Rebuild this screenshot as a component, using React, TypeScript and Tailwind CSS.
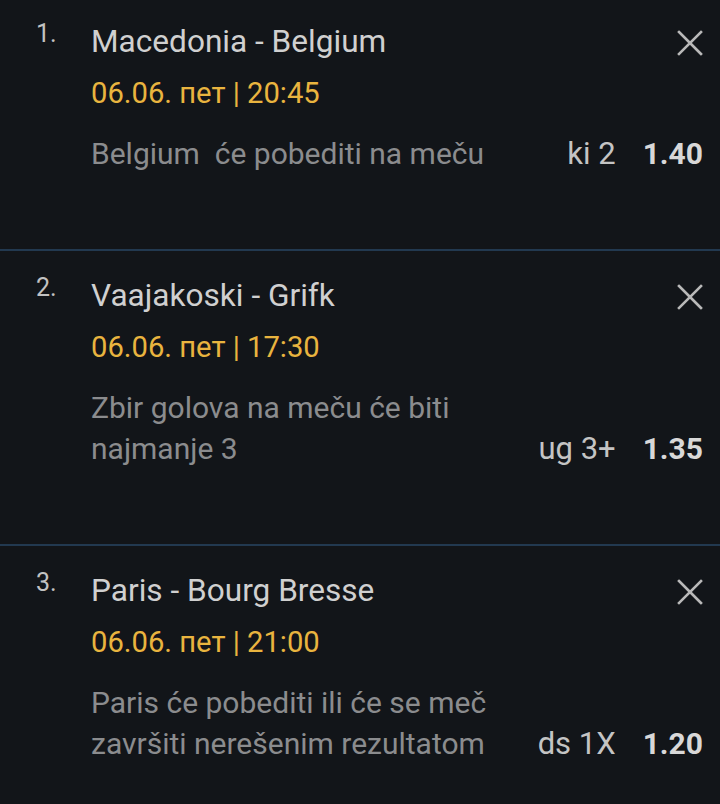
import React from "react";

type Bet = {
  n: string;
  title: string;
  date: string;
  desc: string[];
  pick: string;
  odd: string;
};

const bets: Bet[] = [
  { n: "1.", title: "Macedonia - Belgium", date: "06.06. пет | 20:45", desc: ["Belgium\u00a0 će pobediti na meču"], pick: "ki 2", odd: "1.40" },
  { n: "2.", title: "Vaajakoski - Grifk", date: "06.06. пет | 17:30", desc: ["Zbir golova na meču će biti", "najmanje 3"], pick: "ug 3+", odd: "1.35" },
  { n: "3.", title: "Paris - Bourg Bresse", date: "06.06. пет | 21:00", desc: ["Paris će pobediti ili će se meč", "završiti nerešenim rezultatom"], pick: "ds 1X", odd: "1.20" },
];

function CloseIcon() {
  return (
    <svg width="26" height="26" viewBox="0 0 26 26" fill="none" stroke="#b9b9b9" strokeWidth="2.6" strokeLinecap="square">
      <path d="M2 2L24 24M24 2L2 24" />
    </svg>
  );
}

export default function App() {
  return (
    <div className="w-[720px] h-[804px] overflow-hidden bg-[#121519]" style={{ fontFamily: "Roboto, 'Noto Sans', sans-serif" }}>
      <div className="mt-[-3px] flex flex-col">
        {bets.map((b) => (
          <div key={b.n} className="flex border-b-2 border-[#223950] pt-[23px] pb-[75px] pr-[17px]">
            <div className="w-[91px] shrink-0 pl-[36px] pt-[1px] text-[25px] leading-[26px] text-[#c2c2c2]">{b.n}</div>
            <div className="flex-1 flex flex-col">
              <div className="flex justify-between items-start">
                <div className="text-[31.6px] leading-[44px] text-[#d0d0d0]">{b.title}</div>
                <div className="mt-[10px]"><CloseIcon /></div>
              </div>
              <div className="mt-[7px] text-[29.2px] leading-[44px] text-[#e9b43f]">{b.date}</div>
              <div className="mt-[18px] flex justify-between items-end">
                <div className="text-[30px] leading-[41px] text-[#8b8c8e]">
                  {b.desc.map((d) => (
                    <div key={d} className="whitespace-pre">{d}</div>
                  ))}
                </div>
                <div className="flex items-baseline gap-[27px] leading-[41px]">
                  <span className="text-[31px] text-[#c4c4c4]">{b.pick}</span>
                  <span className="text-[30px] font-bold text-[#d8d8d8]">{b.odd}</span>
                </div>
              </div>
            </div>
          </div>
        ))}
      </div>
    </div>
  );
}
